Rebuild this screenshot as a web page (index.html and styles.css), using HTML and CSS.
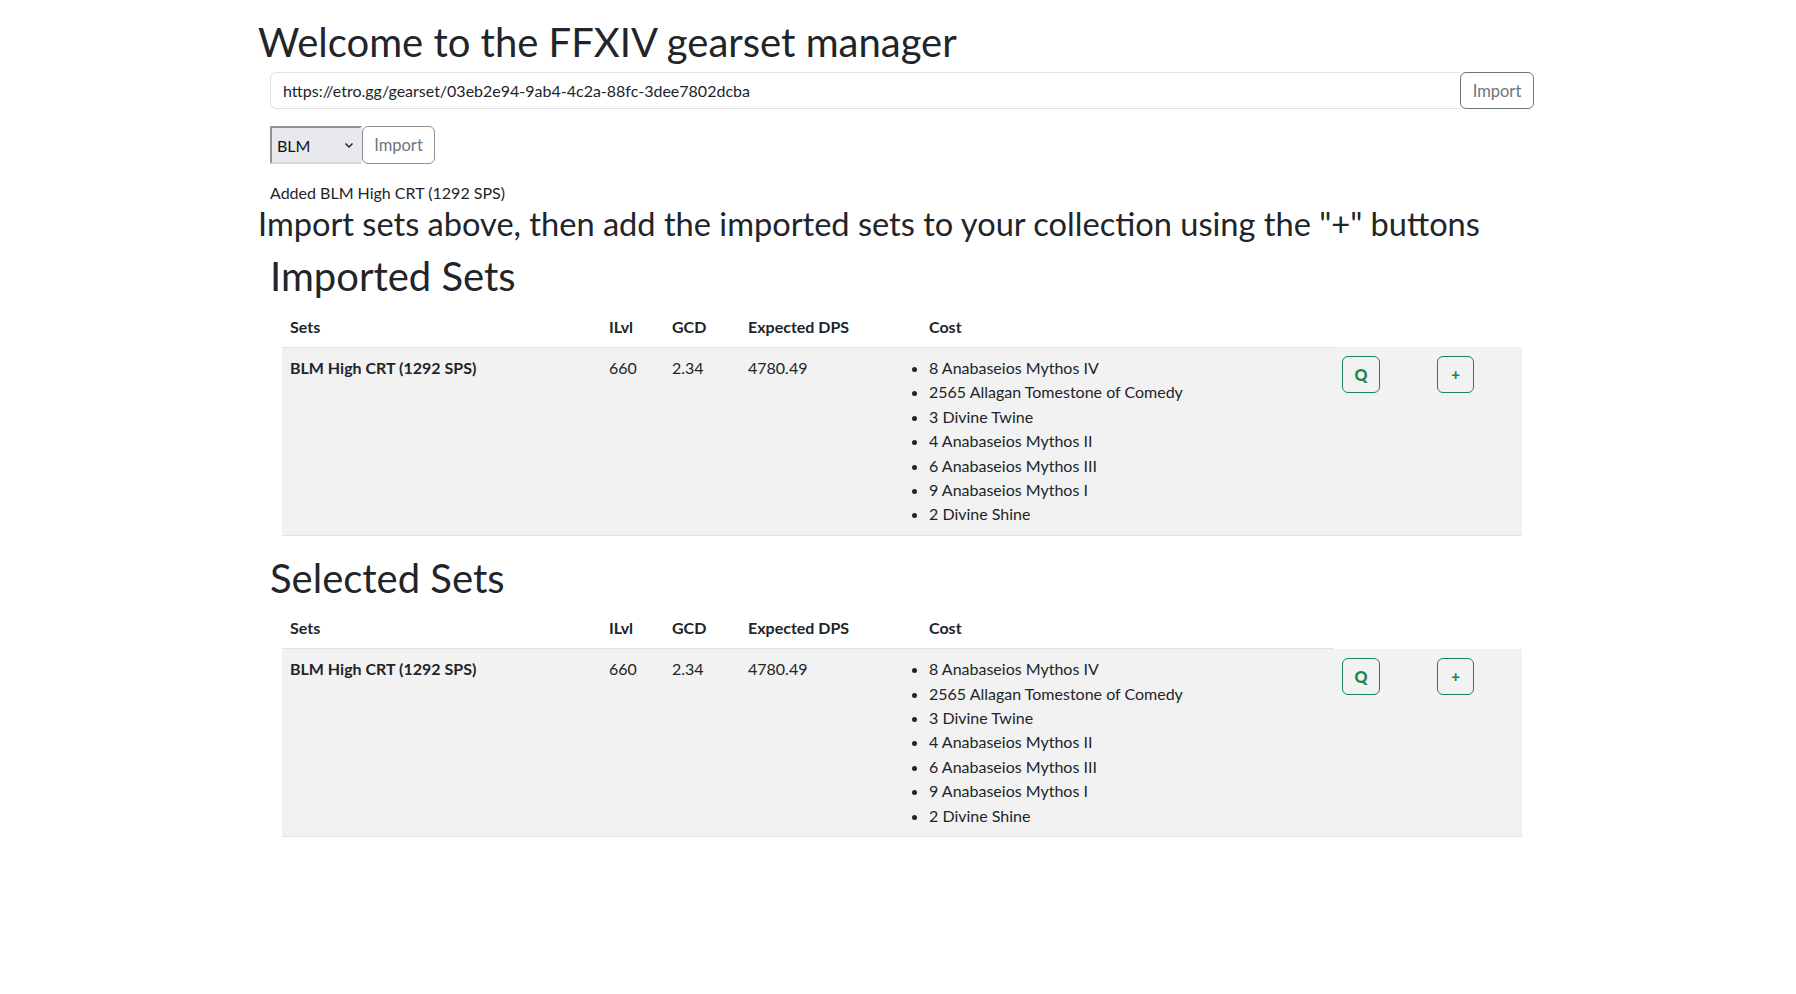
FILE: index.html
```html
<!DOCTYPE html>
<html lang="en">
<head>
<meta charset="utf-8">
<title>FFXIV gearset manager</title>
<link rel="stylesheet" href="styles.css">
</head>
<body>
<div class="page">
  <h1 class="title">Welcome to the FFXIV gearset manager</h1>
  <div class="pad">
    <div class="input-group">
      <input class="url" type="text" value="https://etro.gg/gearset/03eb2e94-9ab4-4c2a-88fc-3dee7802dcba">
      <button class="btn btn-grey btn-attached">Import</button>
    </div>
    <div class="select-row">
      <div class="select-wrap">
        <select class="job"><option>BLM</option></select>
        <svg class="chev" width="10" height="8" viewBox="0 0 10 8"><path d="M1.5 2.5 L5 6 L8.5 2.5" fill="none" stroke="#222" stroke-width="1.5"/></svg>
      </div>
      <button class="btn btn-grey">Import</button>
    </div>
    <p class="status">Added BLM High CRT (1292 SPS)</p>
  </div>
  <h2 class="hint">Import sets above, then add the imported sets to your collection using the "+" buttons</h2>

  <section class="sets">
    <h1 class="section-title">Imported Sets</h1>
    <table class="gear">
      <colgroup>
        <col class="c-name"><col class="c-ilvl"><col class="c-gcd"><col class="c-dps"><col class="c-cost"><col class="c-q"><col class="c-add">
      </colgroup>
      <thead>
        <tr><th>Sets</th><th>ILvl</th><th>GCD</th><th>Expected DPS</th><th>Cost</th></tr>
      </thead>
      <tbody>
        <tr>
          <td class="name">BLM High CRT (1292 SPS)</td>
          <td>660</td>
          <td>2.34</td>
          <td>4780.49</td>
          <td>
            <ul class="cost">
              <li>8 Anabaseios Mythos IV</li>
              <li>2565 Allagan Tomestone of Comedy</li>
              <li>3 Divine Twine</li>
              <li>4 Anabaseios Mythos II</li>
              <li>6 Anabaseios Mythos III</li>
              <li>9 Anabaseios Mythos I</li>
              <li>2 Divine Shine</li>
            </ul>
          </td>
          <td><button class="btn btn-green">Q</button></td>
          <td><button class="btn btn-green btn-plus">+</button></td>
        </tr>
      </tbody>
    </table>
  </section>

  <section class="sets">
    <h1 class="section-title">Selected Sets</h1>
    <table class="gear">
      <colgroup>
        <col class="c-name"><col class="c-ilvl"><col class="c-gcd"><col class="c-dps"><col class="c-cost"><col class="c-q"><col class="c-add">
      </colgroup>
      <thead>
        <tr><th>Sets</th><th>ILvl</th><th>GCD</th><th>Expected DPS</th><th>Cost</th></tr>
      </thead>
      <tbody>
        <tr>
          <td class="name">BLM High CRT (1292 SPS)</td>
          <td>660</td>
          <td>2.34</td>
          <td>4780.49</td>
          <td>
            <ul class="cost">
              <li>8 Anabaseios Mythos IV</li>
              <li>2565 Allagan Tomestone of Comedy</li>
              <li>3 Divine Twine</li>
              <li>4 Anabaseios Mythos II</li>
              <li>6 Anabaseios Mythos III</li>
              <li>9 Anabaseios Mythos I</li>
              <li>2 Divine Shine</li>
            </ul>
          </td>
          <td><button class="btn btn-green">Q</button></td>
          <td><button class="btn btn-green btn-plus">+</button></td>
        </tr>
      </tbody>
    </table>
  </section>
</div>
</body>
</html>
```
FILE: styles.css
```css
* { box-sizing: border-box; }

html, body {
  margin: 0;
  background: #fff;
}

body {
  font-family: Lato, "Open Sans", sans-serif;
  font-size: 16px;
  line-height: 1.5;
  color: #212529;
}

.page {
  width: 1288px;
  margin-left: 258px;
  padding-top: 18px;
}

.title {
  margin: 0 0 6px;
  font-size: 40px;
  font-weight: 400;
  line-height: 48px;
}

.pad {
  padding: 0 12px;
}

.input-group {
  display: flex;
  height: 37px;
}

.url {
  flex: 1;
  min-width: 0;
  height: 37px;
  padding: 6px 12px;
  border: 1px solid #dee2e6;
  border-right: none;
  border-radius: 6px 0 0 6px;
  font-family: inherit;
  font-size: 16px;
  color: #212529;
  background: #fff;
  outline: none;
}

.btn {
  font-family: inherit;
  font-size: 16px;
  line-height: 24px;
  background: transparent;
  cursor: pointer;
  border-radius: 6px;
}

.btn-grey {
  color: #6c757d;
  border: 1px solid #6c757d;
  padding: 5px 12px;
  font-size: 16.5px;
}

.btn-attached {
  width: 74px;
  height: 37px;
  padding: 0;
}

.select-row {
  display: flex;
  align-items: stretch;
  margin-top: 17px;
  height: 38px;
}

.select-row .btn-grey {
  width: 73px;
  padding: 0;
  border-color: #8a9096;
}

.select-wrap {
  position: relative;
  width: 92px;
}

.job {
  appearance: none;
  -webkit-appearance: none;
  width: 100%;
  height: 100%;
  margin: 0;
  padding: 0 0 0 5px;
  font-family: inherit;
  font-size: 16px;
  color: #111;
  background: #e9e9ed;
  border: 2px solid #8f8f9d;
  border-right-color: #e9e9ed;
  border-bottom-color: #d8d8de;
  border-radius: 0;
  outline: none;
}

.chev {
  position: absolute;
  right: 8px;
  top: 15px;
  pointer-events: none;
}

.status {
  margin: 17px 0 0;
  line-height: 24px;
}

.hint {
  margin: 0;
  font-size: 32.6px;
  font-weight: 400;
  line-height: 38.4px;
}

.sets {
  padding: 9px 12px 0;
}

.section-title {
  margin: 0 0 6.5px;
  font-size: 40px;
  font-weight: 400;
  line-height: 48px;
}

.gear {
  width: 1240px;
  margin: 0 12px 9px;
  border-collapse: collapse;
  table-layout: fixed;
}

.c-name { width: 319px; }
.c-ilvl { width: 63px; }
.c-gcd { width: 76px; }
.c-dps { width: 181px; }
.c-cost { width: 413px; }
.c-q { width: 95px; }
.c-add { width: 93px; }

.gear th {
  padding: 8px;
  text-align: left;
  font-weight: 700;
  line-height: 24px;
  border-bottom: 1px solid #dee2e6;
}

.gear td {
  padding: 8px;
  vertical-align: top;
  line-height: 24px;
  background: #f2f2f2;
  border-bottom: 1px solid #dee2e6;
}

.gear td.name {
  font-weight: 700;
}

.cost {
  margin: 0;
  padding: 0;
  list-style: disc outside;
}

.cost li {
  line-height: 24.4px;
}

.btn-green {
  width: 38px;
  height: 37px;
  margin-top: 1px;
  padding: 0;
  color: #198754;
  border: 1px solid #198754;
  font-size: 16px;
  font-weight: 900;
  line-height: 35px;
}

.btn-plus {
  width: 37px;
  font-size: 15px;
}
```
